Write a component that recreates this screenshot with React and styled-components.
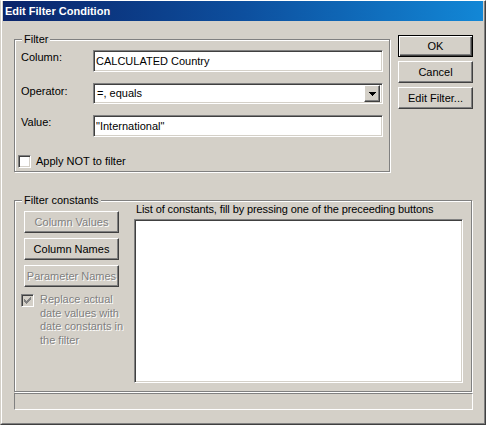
import React from "react";
import styled, { createGlobalStyle } from "styled-components";

const Global = createGlobalStyle`
  html, body { margin: 0; padding: 0; background: #d4d0c8; }
  body {
    font-family: Tahoma, "Liberation Sans", Arial, sans-serif;
    font-size: 11px;
    color: #000;
  }
  * { box-sizing: border-box; }
`;

const Window = styled.div`
  width: 486px;
  height: 425px;
  background: #d4d0c8;
  border: 1px solid;
  border-color: #fff #404040 #404040 #d4d0c8;
`;

const Frame = styled.div`
  height: 100%;
  display: flex;
  flex-direction: column;
  border-style: solid;
  border-width: 0 1px 1px 1px;
  border-color: #fff #808080 #808080 #fff;
  padding: 0 1px 1px 1px;
`;

const TitleBar = styled.div`
  flex: none;
  height: 20px;
  padding-left: 2px;
  background: linear-gradient(to right, #0a246a 0%, #0d4f9e 50%, #1287d6 100%);
  color: #fff;
  font-weight: bold;
  font-size: 11px;
  line-height: 20px;
  white-space: nowrap;
`;

const Body = styled.div`
  flex: 1;
  display: flex;
  flex-direction: column;
  padding: 12px 10px 0 11px;
`;

const TopRow = styled.div`
  display: flex;
  align-items: flex-start;
  gap: 8px;
`;

const Group = styled.fieldset`
  margin: 0;
  padding: 0;
  min-inline-size: 0;
  border: 1px solid #808080;
  box-shadow: 1px 1px 0 #fff, inset 1px 1px 0 #fff;
`;

const Legend = styled.legend`
  margin-left: 7px;
  padding: 0 2px;
  line-height: 13px;
  background: #d4d0c8;
`;

const FilterGroup = styled(Group)`
  width: 376px;
  flex: none;
`;

const Form = styled.div`
  padding: 4px 6px 3px 6px;
  display: flex;
  flex-direction: column;
`;

const FieldRow = styled.div`
  display: grid;
  grid-template-columns: 72px 290px;
  align-items: start;
  margin-top: ${(p) => p.$gap || 0}px;
`;

const FieldLabel = styled.label`
  line-height: 13px;
  padding-top: ${(p) => p.$offset ?? 1}px;
  white-space: nowrap;
`;

const sunken = `
  border: 1px solid;
  border-color: #808080 #fff #fff #808080;
  box-shadow: inset 1px 1px 0 #404040, inset -1px -1px 0 #d4d0c8;
`;

const TextField = styled.input`
  width: 290px;
  height: 22px;
  margin: 0;
  padding: 0 2px;
  font: inherit;
  color: #000;
  background: #fff;
  outline: none;
  ${sunken}
`;

const Combo = styled.div`
  width: 290px;
  height: 21px;
  display: flex;
  align-items: center;
  padding: 2px 2px 2px 3px;
  background: #fff;
  ${sunken}
`;

const ComboText = styled.span`
  flex: 1;
  line-height: 13px;
  white-space: nowrap;
`;

const raised = `
  background: #d4d0c8;
  border: 1px solid;
  border-color: #fff #404040 #404040 #fff;
  box-shadow: inset -1px -1px 0 #808080, inset 1px 1px 0 #d4d0c8;
`;

const DropButton = styled.span`
  flex: none;
  width: 16px;
  height: 17px;
  display: flex;
  align-items: center;
  justify-content: center;
  ${raised}
`;

const CheckRow = styled.label`
  display: flex;
  align-items: ${(p) => (p.$top ? "flex-start" : "center")};
  gap: ${(p) => p.$gap || 5}px;
  margin-left: -3px;
  margin-top: ${(p) => p.$mt || 0}px;
  line-height: ${(p) => p.$lh || 13}px;
  white-space: nowrap;
  color: ${(p) => (p.$disabled ? "#808080" : "#000")};
  text-shadow: ${(p) => (p.$disabled ? "1px 1px 0 #fff" : "none")};
`;

const CheckBox = styled.span`
  flex: none;
  width: 13px;
  height: 13px;
  margin-top: ${(p) => p.$mt || 0}px;
  display: flex;
  align-items: center;
  justify-content: center;
  background: ${(p) => (p.$disabled ? "#d4d0c8" : "#fff")};
  ${sunken}
`;

const ButtonCol = styled.div`
  flex: none;
  width: 75px;
  margin-top: 2px;
  display: flex;
  flex-direction: column;
  gap: 4px;
`;

const Button = styled.button`
  width: ${(p) => p.$w || 75}px;
  height: 22px;
  margin: 0;
  padding: 0;
  font: inherit;
  line-height: 13px;
  text-align: center;
  white-space: nowrap;
  color: ${(p) => (p.disabled ? "#808080" : "#000")};
  text-shadow: ${(p) => (p.disabled ? "1px 1px 0 #fff" : "none")};
  ${raised}
  ${(p) =>
    p.$default &&
    `
    border: 1px solid #000;
    box-shadow: inset 1px 1px 0 #fff, inset -1px -1px 0 #404040, inset -2px -2px 0 #808080;
  `}
`;

const ConstGroup = styled(Group)`
  width: 458px;
  margin-top: 22px;
`;

const ConstBody = styled.div`
  display: flex;
  align-items: flex-start;
  gap: 15px;
  padding: 0 8px 8px 9px;
`;

const LeftCol = styled.div`
  flex: none;
  width: 95px;
  padding-top: 4px;
  display: flex;
  flex-direction: column;
  gap: 5px;
`;

const RightCol = styled.div`
  flex: none;
  width: 329px;
  margin-top: -4px;
  display: flex;
  flex-direction: column;
`;

const Caption = styled.div`
  line-height: 13px;
  padding-left: 2px;
  white-space: nowrap;
  letter-spacing: -0.1px;
`;

const ListBox = styled.div`
  margin-top: 3px;
  height: 164px;
  background: #fff;
  ${sunken}
`;

const StatusPanel = styled.div`
  margin-top: 1px;
  height: 17px;
  border: 1px solid;
  border-color: #808080 #fff #fff #808080;
`;

const Arrow = () => (
  <svg width="7" height="4" viewBox="0 0 7 4" shapeRendering="crispEdges">
    <rect x="0" y="0" width="7" height="1" fill="#000" />
    <rect x="1" y="1" width="5" height="1" fill="#000" />
    <rect x="2" y="2" width="3" height="1" fill="#000" />
    <rect x="3" y="3" width="1" height="1" fill="#000" />
  </svg>
);

const CheckMark = ({ color }) => {
  const tops = [2, 3, 4, 3, 2, 1, 0];
  return (
    <svg width="7" height="7" viewBox="0 0 7 7" shapeRendering="crispEdges">
      {tops.map((t, i) => (
        <rect key={i} x={i} y={t} width="1" height="3" fill={color} />
      ))}
    </svg>
  );
};

export default function App() {
  return (
    <>
      <Global />
      <Window>
        <Frame>
          <TitleBar>Edit Filter Condition</TitleBar>
          <Body>
            <TopRow>
              <FilterGroup>
                <Legend>Filter</Legend>
                <Form>
                  <FieldRow>
                    <FieldLabel>Column:</FieldLabel>
                    <TextField readOnly value="CALCULATED Country" />
                  </FieldRow>
                  <FieldRow $gap={11}>
                    <FieldLabel $offset={2}>Operator:</FieldLabel>
                    <Combo>
                      <ComboText>=, equals</ComboText>
                      <DropButton>
                        <Arrow />
                      </DropButton>
                    </Combo>
                  </FieldRow>
                  <FieldRow $gap={11}>
                    <FieldLabel>Value:</FieldLabel>
                    <TextField readOnly value={'"International"'} />
                  </FieldRow>
                  <CheckRow $mt={18}>
                    <CheckBox />
                    <span>Apply NOT to filter</span>
                  </CheckRow>
                </Form>
              </FilterGroup>
              <ButtonCol>
                <Button $default>OK</Button>
                <Button>Cancel</Button>
                <Button>Edit Filter...</Button>
              </ButtonCol>
            </TopRow>

            <ConstGroup>
              <Legend>Filter constants</Legend>
              <ConstBody>
                <LeftCol>
                  <Button $w={95} disabled>
                    Column Values
                  </Button>
                  <Button $w={95}>Column Names</Button>
                  <Button $w={95} disabled>
                    Parameter Names
                  </Button>
                  <CheckRow $top $disabled $gap={6} $mt={1} $lh={13.5}>
                    <CheckBox $disabled $mt={1}>
                      <CheckMark color="#808080" />
                    </CheckBox>
                    <span>
                      Replace actual
                      <br />
                      date values with
                      <br />
                      date constants in
                      <br />
                      the filter
                    </span>
                  </CheckRow>
                </LeftCol>
                <RightCol>
                  <Caption>
                    List of constants, fill by pressing one of the preceeding buttons
                  </Caption>
                  <ListBox />
                </RightCol>
              </ConstBody>
            </ConstGroup>
            <StatusPanel />
          </Body>
        </Frame>
      </Window>
    </>
  );
}
